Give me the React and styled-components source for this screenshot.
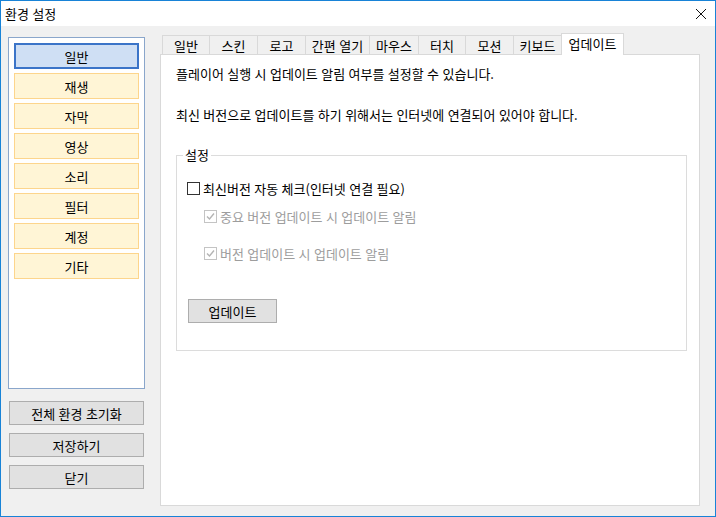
import React from "react";
import styled, { createGlobalStyle } from "styled-components";

const GlobalStyle = createGlobalStyle`
  html, body {
    margin: 0;
    padding: 0;
    background: #fff;
  }
  body {
    font-family: "Noto Sans CJK KR", "Noto Sans", sans-serif;
    font-size: 13px;
    color: #000;
    word-spacing: 0.5px;
  }
  * {
    box-sizing: border-box;
  }
`;

const Window = styled.div`
  width: 716px;
  height: 517px;
  border: 1px solid #1883d7;
  display: flex;
  flex-direction: column;
  background: #f0f0f0;
`;

const TitleBar = styled.div`
  height: 25px;
  background: #fff;
  display: flex;
  align-items: center;
  justify-content: space-between;
  padding: 0 8px 0 4px;
`;

const CloseIcon = () => (
  <svg width="12" height="12" viewBox="0 0 12 12">
    <path d="M1 1 L11 11 M11 1 L1 11" stroke="#111" strokeWidth="1" fill="none" />
  </svg>
);

const Body = styled.div`
  flex: 1;
  display: flex;
  gap: 15px;
  padding: 7px 15px 10px 7px;
`;

const Sidebar = styled.div`
  width: 137px;
  display: flex;
  flex-direction: column;
`;

const CategoryList = styled.div`
  margin-top: 4px;
  height: 352px;
  background: #fff;
  border: 1px solid #8aa6cb;
  padding: 5px;
  display: flex;
  flex-direction: column;
  gap: 4px;
`;

const CategoryItem = styled.div`
  height: 26px;
  display: flex;
  align-items: center;
  justify-content: center;
  border: 1px solid ${({ $active }) => ($active ? "#3b74c8" : "#fdd58c")};
  background: ${({ $active }) => ($active ? "#cfdff4" : "#fff5d6")};
  ${({ $active }) => $active && "border-width: 2px;"}
`;

const SideButtons = styled.div`
  margin-top: 12px;
  padding: 0 1px;
  display: flex;
  flex-direction: column;
  gap: 8px;
`;

const PushButton = styled.div`
  height: 24px;
  width: ${({ $width }) => ($width ? `${$width}px` : "auto")};
  display: flex;
  align-items: center;
  justify-content: center;
  background: #e1e1e1;
  border: 1px solid #adadad;
`;

const TabArea = styled.div`
  flex: 1;
  display: flex;
  flex-direction: column;
`;

const TabStrip = styled.div`
  height: 21px;
  display: flex;
  align-items: flex-end;
  padding-left: 2px;
  position: relative;
  z-index: 1;
`;

const Tab = styled.div`
  width: ${({ $width }) => $width}px;
  height: ${({ $active }) => ($active ? "22px" : "19px")};
  margin-right: -1px;
  margin-bottom: ${({ $active }) => ($active ? "-1px" : "0")};
  border: 1px solid #d9d9d9;
  border-bottom: none;
  background: ${({ $active }) => ($active ? "#fff" : "#f0f0f0")};
  display: flex;
  align-items: center;
  justify-content: center;
  padding-bottom: ${({ $active }) => ($active ? "2px" : "0")};
`;

const Panel = styled.div`
  flex: 1;
  background: #fff;
  border: 1px solid #d9d9d9;
  padding: 11px 12px 0 15px;
`;

const Line = styled.div`
  line-height: 16px;
  margin-bottom: ${({ $gap }) => $gap || 0}px;
`;

const GroupBox = styled.div`
  position: relative;
  height: 196px;
  border: 1px solid #dcdcdc;
  padding: 24px 0 0 10px;
`;

const GroupCaption = styled.span`
  position: absolute;
  top: -9px;
  left: 6px;
  padding: 0 2px;
  background: #fff;
  line-height: 16px;
`;

const CheckRow = styled.div`
  display: flex;
  align-items: center;
  gap: 3px;
  height: 16px;
  margin-top: ${({ $top }) => $top || 0}px;
  margin-left: ${({ $indent }) => ($indent ? 17 : 0)}px;
  color: ${({ $disabled }) => ($disabled ? "#9d9d9d" : "#000")};
`;

const Box = styled.span`
  width: 13px;
  height: 13px;
  flex-shrink: 0;
  border: 1px solid ${({ $disabled }) => ($disabled ? "#c4c4c4" : "#333")};
  background: #fff;
  display: flex;
  align-items: center;
  justify-content: center;
`;

const CheckMark = () => (
  <svg width="11" height="11" viewBox="0 0 11 11">
    <path d="M2 5.5 L4.5 8 L9 2.5" stroke="#b4b4b4" strokeWidth="1.4" fill="none" />
  </svg>
);

const Checkbox = ({ checked, disabled, indent, top, children }) => (
  <CheckRow $disabled={disabled} $indent={indent} $top={top}>
    <Box $disabled={disabled}>{checked && <CheckMark />}</Box>
    <span>{children}</span>
  </CheckRow>
);

const ButtonWrap = styled.div`
  margin-top: 38px;
  margin-left: 1px;
`;

const categories = ["일반", "재생", "자막", "영상", "소리", "필터", "계정", "기타"];

const tabs = [
  ["일반", 48],
  ["스킨", 49],
  ["로고", 49],
  ["간편 열기", 65],
  ["마우스", 50],
  ["터치", 48],
  ["모션", 49],
  ["키보드", 49],
  ["업데이트", 63, true]
];

export default function App() {
  return (
    <>
      <GlobalStyle />
      <Window>
        <TitleBar>
          <span>환경 설정</span>
          <CloseIcon />
        </TitleBar>
        <Body>
          <Sidebar>
            <CategoryList>
              {categories.map((c, i) => (
                <CategoryItem key={c} $active={i === 0}>
                  {c}
                </CategoryItem>
              ))}
            </CategoryList>
            <SideButtons>
              <PushButton>전체 환경 초기화</PushButton>
              <PushButton>저장하기</PushButton>
              <PushButton>닫기</PushButton>
            </SideButtons>
          </Sidebar>
          <TabArea>
            <TabStrip>
              {tabs.map(([label, width, active]) => (
                <Tab key={label} $width={width} $active={active}>
                  {label}
                </Tab>
              ))}
            </TabStrip>
            <Panel>
              <Line $gap={25}>플레이어 실행 시 업데이트 알림 여부를 설정할 수 있습니다.</Line>
              <Line $gap={32}>최신 버전으로 업데이트를 하기 위해서는 인터넷에 연결되어 있어야 합니다.</Line>
              <GroupBox>
                <GroupCaption>설정</GroupCaption>
                <Checkbox>최신버전 자동 체크(인터넷 연결 필요)</Checkbox>
                <Checkbox checked disabled indent top={12}>
                  중요 버전 업데이트 시 업데이트 알림
                </Checkbox>
                <Checkbox checked disabled indent top={21}>
                  버전 업데이트 시 업데이트 알림
                </Checkbox>
                <ButtonWrap>
                  <PushButton $width={89}>업데이트</PushButton>
                </ButtonWrap>
              </GroupBox>
            </Panel>
          </TabArea>
        </Body>
      </Window>
    </>
  );
}
